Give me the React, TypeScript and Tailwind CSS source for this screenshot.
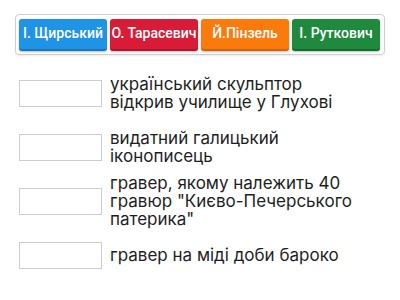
import React from "react";

const buttons = [
  { label: "І. Щирський", bg: "bg-[#1f93e6]", border: "border-b-[#1777c0]" },
  { label: "О. Тарасевич", bg: "bg-[#d81b36]", border: "border-b-[#b0142b]" },
  { label: "Й.Пінзель", bg: "bg-[#fb7a0c]", border: "border-b-[#d36308]" },
  { label: "І. Руткович", bg: "bg-[#1f8a3e]", border: "border-b-[#156c2f]" },
];

const rows = [
  "український скульптор відкрив училище у Глухові",
  "видатний галицький іконописець",
  'гравер, якому належить 40 гравюр "Києво-Печерського патерика"',
  "гравер на міді доби бароко",
];

export default function App() {
  return (
    <div className="w-[400px] h-[300px] bg-white overflow-hidden">
      <div className="ml-[15px] mt-[14px] w-[370px] h-[41px] border border-[#cfcfcf] rounded-[4px] flex items-center gap-[3px] px-[3px] shadow-[0_1px_2px_rgba(0,0,0,0.08)]">
        {buttons.map((b) => (
          <div
            key={b.label}
            className={`w-[88px] h-[32px] rounded-[3px] ${b.bg} border-b-2 ${b.border} flex items-center justify-center text-white text-[14px] font-medium shadow-[0_1px_2px_rgba(0,0,0,0.25)] whitespace-nowrap`}
            style={{ fontFamily: "Roboto, 'Liberation Sans', sans-serif" }}
          >
            {b.label}
          </div>
        ))}
      </div>
      <div className="mt-[11px] flex flex-col">
        {rows.map((t) => (
          <div key={t} className="h-[54px] flex items-center pl-[19px]">
            <div className="w-[83px] h-[27px] border border-[#cdcdcd] bg-white shrink-0" />
            <div
              className="ml-[8px] w-[250px] text-[17px] leading-[18px] text-[#1e1e1e]"
              style={{ fontFamily: "Inter, 'Liberation Sans', sans-serif" }}
            >
              {t}
            </div>
          </div>
        ))}
      </div>
    </div>
  );
}
